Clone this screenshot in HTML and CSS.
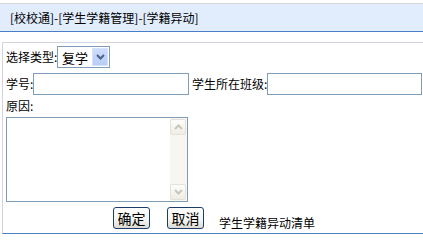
FILE: index.html
```html
<!DOCTYPE html>
<html>
<head>
<meta charset="utf-8">
<link rel="stylesheet" href="styles.css">
</head>
<body>
<div class="title">[校校通]-[学生学籍管理]-[学籍异动]</div>
<div class="panel">
  <div class="row r1">
    <span class="lbl">选择类型:</span>
    <div class="select">
      <span class="val">复学</span>
      <span class="arrow"><svg width="9" height="6" viewBox="0 0 9 6"><path d="M1 1 L4.5 4.5 L8 1" fill="none" stroke="#4d6185" stroke-width="2"/></svg></span>
    </div>
  </div>
  <div class="row r2">
    <span class="lbl">学号:</span>
    <input class="input w1" type="text">
    <span class="lbl l2">学生所在班级:</span>
    <input class="input w2" type="text">
  </div>
  <div class="lbl r3">原因:</div>
  <div class="ta">
    <textarea class="ta-body"></textarea>
    <div class="sb">
      <div class="sbtn"><svg width="9" height="6" viewBox="0 0 9 6"><path d="M1 5 L4.5 1.5 L8 5" fill="none" stroke="#c9c7ba" stroke-width="2"/></svg></div>
      <div class="track"></div>
      <div class="sbtn"><svg width="9" height="6" viewBox="0 0 9 6"><path d="M1 1 L4.5 4.5 L8 1" fill="none" stroke="#c9c7ba" stroke-width="2"/></svg></div>
    </div>
  </div>
  <div class="row r4">
    <button class="btn">确定</button>
    <button class="btn b2">取消</button>
    <span class="note">学生学籍异动清单</span>
  </div>
</div>
</body>
</html>
```
FILE: styles.css
```css
* { box-sizing: border-box; }
body {
  margin: 0;
  font-family: "Noto Sans CJK SC", "Liberation Sans", sans-serif;
  font-size: 12px;
  color: #000;
  background: #fff;
}
.title {
  margin-top: 3px;
  height: 29px;
  border-top: 1px solid #d6d6d6;
  border-bottom: 1px solid #4a7fc6;
  background: #e1edfd;
  line-height: 27px;
  padding-left: 10px;
}
.panel {
  margin-top: 10px;
  margin-left: 2px;
  height: 192px;
  border-top: 1px solid #d3d3df;
  border-left: 1px solid #d3d3df;
  border-bottom: 1px solid #4a7fc6;
  padding: 3px 0 0 3px;
}
.row {
  display: flex;
  align-items: center;
  height: 22px;
}
.lbl { line-height: 16px; white-space: nowrap; }
.r1 .lbl { width: 51px; }
.select {
  width: 53px;
  height: 22px;
  border: 1px solid #7f9db9;
  display: flex;
  align-items: center;
  padding: 1px;
}
.val { flex: 1; padding-left: 3px; font-size: 13px; }
.arrow {
  width: 16px;
  height: 18px;
  background: linear-gradient(#cddcfc, #b9cdf7);
  border: 1px solid #d6e2fc;
  display: flex;
  align-items: center;
  justify-content: center;
}
.r2 { margin-top: 5px; }
.r2 > .lbl:first-child { width: 27px; }
.input {
  height: 22px;
  border: 1px solid #7f9db9;
  padding: 0 2px;
  font: inherit;
  outline: none;
  margin: 0;
}
.w1 { width: 156px; }
.l2 { margin-left: 3px; width: 75px; }
.w2 { width: 155px; }
.r3 { margin-top: 3px; margin-bottom: 3px; }
.ta {
  width: 182px;
  height: 85px;
  border: 1px solid #7f9db9;
  display: flex;
}
.ta-body {
  flex: 1;
  border: none;
  resize: none;
  outline: none;
  margin: 0;
  padding: 2px;
  font: inherit;
  overflow: hidden;
}
.sb {
  width: 17px;
  display: flex;
  flex-direction: column;
  background: #f7f6f1;
  padding: 1px 1px 1px 0;
}
.sbtn {
  height: 16px;
  border: 1px solid #e4e2d8;
  border-radius: 2px;
  background: linear-gradient(#fdfdfb, #eeede5);
  display: flex;
  align-items: center;
  justify-content: center;
}
.track { flex: 1; }
.r4 { margin-top: 5px; }
.btn {
  height: 22px;
  width: 37px;
  margin: 0 0 0 107px;
  padding: 0 0 1px;
  border: 1px solid #1c3c6c;
  border-radius: 3px;
  background: linear-gradient(#ffffff 0%, #f4f4f0 60%, #dcdad0 100%);
  font: inherit;
  font-size: 14px;
  color: #000;
  line-height: 18px;
}
.b2 { margin-left: 17px; }
.note { margin-left: 15px; margin-top: 8px; }
```
